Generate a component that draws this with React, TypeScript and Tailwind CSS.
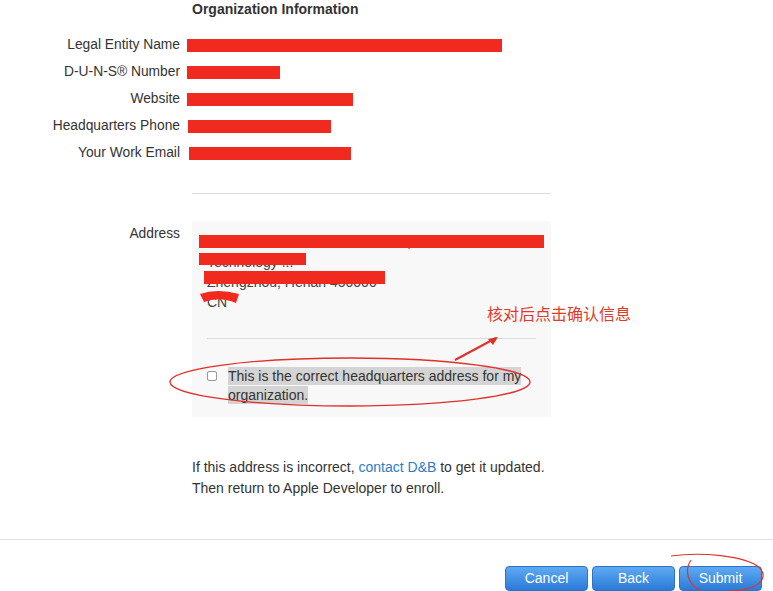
import React from 'react'

const fields = [
  { label: 'Legal Entity Name', bar: 'w-[315px]' },
  { label: 'D-U-N-S® Number', bar: 'w-[93px]' },
  { label: 'Website', bar: 'w-[166px]' },
  { label: 'Headquarters Phone', bar: 'w-[143px] ml-[1px]' },
  { label: 'Your Work Email', bar: 'w-[162px] ml-[2px]' },
]

function Btn({ children }: { children: React.ReactNode }) {
  return (
    <button className="h-[25px] w-[83px] rounded-[4px] border border-[#2f73c4] bg-gradient-to-b from-[#5eaaf2] to-[#2b7ad8] text-[14px] text-white">
      {children}
    </button>
  )
}

export default function App() {
  return (
    <div
      className="relative h-[591px] w-[773px] overflow-hidden bg-white text-[14px] text-[#333]"
      style={{ fontFamily: '"Liberation Sans", "Noto Sans CJK SC", sans-serif' }}
    >
      <div className="pl-[192px] pt-[1px]">
        <h2 className="text-[14px] font-bold leading-[17px] text-[#333]">Organization Information</h2>
      </div>

      <div className="mt-[17px] flex flex-col gap-[7px]">
        {fields.map((f) => (
          <div key={f.label} className="flex h-[20px] items-center">
            <div className="w-[180px] text-right text-[13.8px] leading-[20px]">{f.label}</div>
            <div className="pl-[7px]">
              <div className={`h-[13px] bg-[#f02a1f] ${f.bar}`} />
            </div>
          </div>
        ))}
      </div>

      <div className="ml-[192px] mt-[30px] h-px w-[359px] bg-[#dcdcdc]" />

      <div className="mt-[27px] flex">
        <div className="w-[180px] pt-[3px] text-right text-[13.8px] leading-[20px]">Address</div>
        <div className="ml-[12px] w-[359px] bg-[#f8f8f8] px-[15px] pt-[11px] pb-[12px]">
          <div className="relative leading-[20px] text-[#444]">
            <div>Xxxxxxxx Xxxxxxxx Xxxxxxx Xx., Xxx.</div>
            <div>Technology ...</div>
            <div>Zhengzhou, Henan 450000</div>
            <div>CN</div>
            <div className="absolute left-[-8px] top-[3px] h-[13px] w-[345px] bg-[#f02a1f]" />
            <div className="absolute left-[-8px] top-[21px] h-[12px] w-[107px] bg-[#f02a1f]" />
            <div className="absolute left-[-3px] top-[39px] h-[13px] w-[181px] bg-[#f02a1f]" />
            <svg className="absolute left-[-8px] top-[58px]" width="44" height="16" viewBox="0 0 44 16">
              <path d="M1 4 Q 18 -2 40 4 L 37 13 Q 20 6 5 12 Z" fill="#f02a1f" />
            </svg>
          </div>
          <div className="mt-[26px] h-px w-full bg-[#dcdcdc]" />
          <div className="mt-[28px] flex items-start">
            <div className="mt-[4px] h-[10px] w-[10px] shrink-0 rounded-[2px] border border-[#999] bg-white" />
            <div className="ml-[11px] leading-[19px] text-[#333]">
              <span className="bg-[#d4d4d4] [box-decoration-break:clone] py-[1px]">
                This is the correct headquarters address for my organization.
              </span>
            </div>
          </div>
        </div>
      </div>

      <div className="ml-[192px] mt-[40px] leading-[21px]">
        <div>
          If this address is incorrect, <span className="text-[#2c7cc6]">contact D&amp;B</span> to get it updated.
        </div>
        <div>Then return to Apple Developer to enroll.</div>
      </div>

      <div className="mt-[40px] h-px w-full bg-[#e2e2e2]" />

      <div className="mt-[26px] flex justify-end gap-[4px] pr-[11px]">
        <Btn>Cancel</Btn>
        <Btn>Back</Btn>
        <Btn>Submit</Btn>
      </div>

      {/* annotations */}
      <div className="absolute left-[487px] top-[304px] text-[16px] leading-[22px] text-[#e33a25]">核对后点击确认信息</div>
      <svg className="pointer-events-none absolute left-0 top-0" width="773" height="591" viewBox="0 0 773 591">
        <ellipse cx="350" cy="382" rx="180" ry="24" fill="none" stroke="#e0302a" strokeWidth="1.3" />
        <path d="M455 360 L496 338" stroke="#e0302a" strokeWidth="2" fill="none" />
        <path d="M498 337 L488 339 L493 345 Z" fill="#e0302a" />
        <path
          d="M671 556 C 700 552, 745 555, 760 568 C 768 578, 760 590, 730 591 M 691 560 C 684 570, 688 585, 700 590"
          stroke="#d8372c"
          strokeWidth="1.2"
          fill="none"
        />
      </svg>
    </div>
  )
}
